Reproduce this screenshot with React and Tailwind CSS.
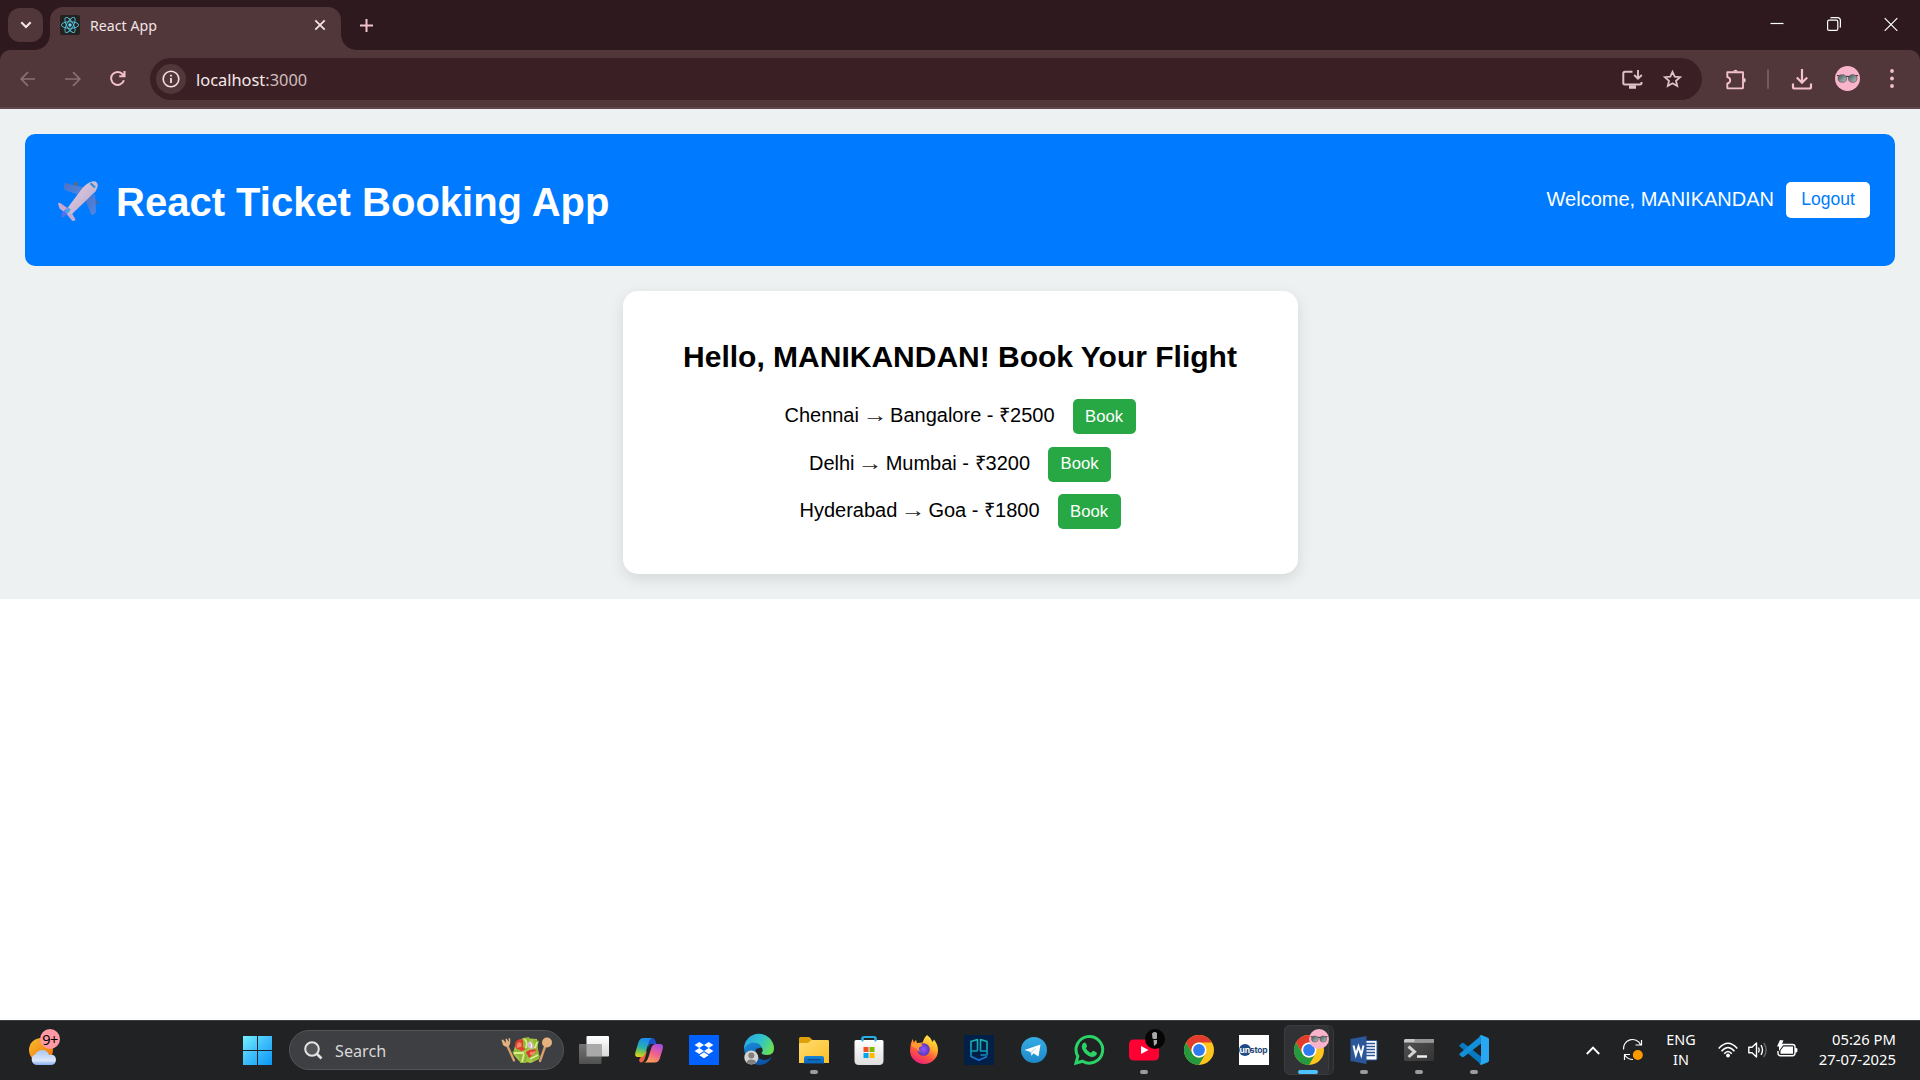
import React from "react";

const flights = [
  { from: "Chennai", to: "Bangalore", price: 2500, row: "h-[48px]", label: "pb-0" },
  { from: "Delhi", to: "Mumbai", price: 3200, row: "h-[47px]", label: "pb-[2px]" },
  { from: "Hyderabad", to: "Goa", price: 1800, row: "h-[47px]", label: "pb-0" },
];

function Icon({ children, size = 30, className = "" }) {
  return (
    <svg width={size} height={size} viewBox={`0 0 ${size} ${size}`} className={`block shrink-0 overflow-visible ${className}`}>
      {children}
    </svg>
  );
}

function ReactLogo() {
  return (
    <svg width="20" height="20" viewBox="0 0 20 20" className="block shrink-0 rounded-[2px] bg-[#222222]">
      <g fill="none" stroke="#58c4dc" strokeWidth="0.9">
        <ellipse cx="10" cy="10" rx="8.6" ry="3.3" />
        <ellipse cx="10" cy="10" rx="8.6" ry="3.3" transform="rotate(60 10 10)" />
        <ellipse cx="10" cy="10" rx="8.6" ry="3.3" transform="rotate(120 10 10)" />
      </g>
      <circle cx="10" cy="10" r="1.7" fill="#61dafb" />
    </svg>
  );
}

function Glasses({ size, className = "" }) {
  return (
    <svg width={size} height={size} viewBox="0 0 25 25" className={`block shrink-0 ${className}`}>
      <defs>
        <linearGradient id="lens" x1="0" y1="0" x2="1" y2="1">
          <stop offset="0" stopColor="#3f5257" />
          <stop offset="1" stopColor="#b9c9c8" />
        </linearGradient>
      </defs>
      <circle cx="12.5" cy="12.5" r="12.5" fill="#f8b4cb" />
      <path d="M2 9.500L5 10M23 9.500L20 10M10.500 11Q12.500 9.500 14.500 11" stroke="#30282a" strokeWidth="1.100" fill="none" />
      <ellipse cx="7.300" cy="12.500" rx="4.200" ry="3.800" fill="url(#lens)" stroke="#5b5053" strokeWidth="0.700" />
      <ellipse cx="17.700" cy="12.500" rx="4.200" ry="3.800" fill="url(#lens)" stroke="#5b5053" strokeWidth="0.700" />
    </svg>
  );
}

function TitleBar() {
  return (
    <div className="flex h-[50px] bg-[#2e191e]">
      <div className="mt-2 ml-2 flex h-[34px] w-[35px] items-center justify-center rounded-[12px] bg-[#51363a]">
        <svg width="12" height="8" viewBox="0 0 12 8" fill="none" stroke="#f3e4e6" strokeWidth="2.200">
          <path d="M1.300 1.300L6 6L10.700 1.300" />
        </svg>
      </div>
      <div className="relative mt-[7px] ml-[7px] flex h-[43px] w-[291px] items-center rounded-t-[13px] bg-[#51363a] pl-[10px]">
        <span className="absolute bottom-0 -left-[15px] h-[15px] w-[15px] bg-[radial-gradient(circle_at_0_0,transparent_14.5px,#51363a_15px)]" />
        <span className="absolute -right-[15px] bottom-0 h-[15px] w-[15px] bg-[radial-gradient(circle_at_100%_0,transparent_14.5px,#51363a_15px)]" />
        <div className="-mt-[7px]"><ReactLogo /></div>
        <span className="-mt-[6px] ml-[10px] text-[14.200px] leading-5 text-[#f3e4e6]">React App</span>
        <svg width="12" height="12" viewBox="0 0 12 12" className="-mt-[7px] mr-[15px] ml-auto" stroke="#f3e4e6" strokeWidth="1.800">
          <path d="M1.300 1.300L10.700 10.700M10.700 1.300L1.300 10.700" />
        </svg>
      </div>
      <svg width="13" height="13" viewBox="0 0 13 13" className="mt-[19px] ml-[19px]" stroke="#f2c1cb" strokeWidth="2">
        <path d="M6.500 0V13M0 6.500H13" />
      </svg>
      <div className="mt-[17px] mr-[22px] ml-auto flex gap-[43px]">
        <svg width="14" height="14" viewBox="0 0 14 14" stroke="#fff" strokeWidth="1.200"><path d="M0.500 6.500H13.500" /></svg>
        <svg width="14" height="14" viewBox="0 0 14 14" fill="none" stroke="#fff" strokeWidth="1.200">
          <rect x="0.600" y="3.200" width="10.200" height="10.200" rx="1.500" />
          <path d="M3.500 1.200Q4 0.600 5 0.600H10.500Q13.400 0.600 13.400 3.500V9Q13.400 10 12.800 10.500" />
        </svg>
        <svg width="14" height="14" viewBox="0 0 14 14" stroke="#fff" strokeWidth="1.200"><path d="M0.700 1.200L13.300 13.800M13.300 1.200L0.700 13.800" /></svg>
      </div>
    </div>
  );
}

function Toolbar() {
  return (
    <div className="bg-[#2e191e]">
      <div className="flex h-[59px] rounded-t-[10px] border-b-2 border-[#5e464a] bg-[#51363a] pt-2 pl-[20px]">
        <div className="mt-[12px] flex h-[18px] gap-[29px]">
          <svg width="16" height="16" viewBox="0 0 16 16" className="mt-px" fill="none" stroke="#8b6f73" strokeWidth="1.700"><path d="M15 8H1.500M8 1.200L1.200 8L8 14.800" /></svg>
          <svg width="16" height="16" viewBox="0 0 16 16" className="mt-px" fill="none" stroke="#8b6f73" strokeWidth="1.700"><path d="M0 8H14M8 1.200L14.800 8L8 14.800" /></svg>
          <svg width="16" height="17" viewBox="0 0 16 17" fill="none" stroke="#f2c1cb" strokeWidth="2">
            <path d="M13.900 10.200A6.500 6.500 0 1 1 12.800 4.400L14.500 6.200M14.500 1V6.300H9.200" />
          </svg>
        </div>
        <div className="ml-[24px] flex h-[42px] w-[1552px] items-center rounded-full bg-[#3a2024] pl-[6px]">
          <div className="flex h-[30px] w-[30px] items-center justify-center rounded-full bg-[#51363a]">
            <svg width="18" height="18" viewBox="0 0 18 18" fill="none" stroke="#f6dfe2" strokeWidth="1.600">
              <circle cx="9" cy="9" r="7.800" /><path d="M9 8V13M9 4.700V6.500" strokeWidth="1.800" />
            </svg>
          </div>
          <span className="mt-px ml-[10px] text-[16.400px] leading-6 text-[#f6e8ea]">localhost<span className="text-[#d0bcbf]">:3000</span></span>
          <svg width="21" height="19" viewBox="0 0 21 19" className="ml-auto" fill="none" stroke="#dcc3c7" strokeWidth="2">
            <path d="M10.500 1.700H3Q1.300 1.700 1.300 3.400V13Q1.300 14.500 3 14.500H17.800Q19.500 14.500 19.500 13V12" />
            <path d="M7 17H14" strokeWidth="3.500" /><path d="M16 0V8.500M12.200 5L16 8.700L19.800 5" strokeWidth="1.900" />
          </svg>
          <svg width="19" height="18" viewBox="0 0 19 18" className="mr-[20px] ml-[20px]" fill="none" stroke="#dcc3c7" strokeWidth="1.800">
            <path d="M9.500 1.800L11.700 6.700L17 7.200L13 10.700L14.200 16L9.500 13.200L4.800 16L6 10.700L2 7.200L7.300 6.700Z" />
          </svg>
        </div>
        <svg width="21" height="21" viewBox="0 0 21 21" className="mt-[11px] ml-[24px]">
          <path d="M1.300 3.200H17V18.800Q17 19.400 16.300 19.400H2Q1.300 19.400 1.300 18.800V14.500Q4.200 14 4.200 11.300Q4.200 8.600 1.300 8.100Z" fill="none" stroke="#f2c1cb" strokeWidth="1.900" strokeLinejoin="round" />
          <path d="M7 2.500A2.600 2.300 0 0 1 12 2.500ZM18 8.700A2.500 2.600 0 0 1 18 13.700Z" fill="#f2c1cb" />
        </svg>
        <div className="mt-[11px] ml-[20px] h-5 w-[2px] rounded-full bg-[#765a5f]" />
        <svg width="22" height="22" viewBox="0 0 22 22" className="mt-[11px] ml-[22px]" fill="none" stroke="#f2c1cb" strokeWidth="2.200">
          <path d="M11 0V13.500M5.800 8.500L11 13.700L16.200 8.500M2 14.500V18Q2 19.500 3.500 19.500H18.500Q20 19.500 20 18V14.500" />
        </svg>
        <Glasses size={25} className="mt-2 ml-[22px]" />
        <svg width="4" height="19" viewBox="0 0 4 19" className="mt-[11px] ml-[30px]" fill="#f2c1cb">
          <circle cx="2" cy="2" r="1.900" /><circle cx="2" cy="9.500" r="1.900" /><circle cx="2" cy="17" r="1.900" />
        </svg>
      </div>
    </div>
  );
}

function Airplane() {
  return (
    <svg width="42" height="42" viewBox="0 0 42 42" className="mt-px mr-[17px] ml-[7px] block shrink-0">
      <defs>
        <linearGradient id="wing" x1="0" y1="0" x2="1" y2="1">
          <stop offset="0" stopColor="#4a74c4" /><stop offset="1" stopColor="#4e86e6" />
        </linearGradient>
        <linearGradient id="body" x1="0" y1="0" x2="1" y2="1">
          <stop offset="0" stopColor="#e6d6e6" /><stop offset="1" stopColor="#b5a0c6" />
        </linearGradient>
      </defs>
      <circle cx="19" cy="4" r="2" fill="#6b6670" />
      <circle cx="38.500" cy="22.500" r="2" fill="#6b6670" />
      <path d="M7.500 3L28 7.500L22 15L8 10Q5.500 7 7.500 3Z" fill="url(#wing)" />
      <path d="M38 14L39 32Q37 36 34 34.500L28.500 20Z" fill="url(#wing)" />
      <path d="M1 23.500Q2 22 4 23.500L11 28.500L14.500 32.500L18.500 39.500Q17 42 15 40.500L9.500 34L2.500 28.500Z" fill="#c9a9d0" />
      <path d="M4.500 37.500L5 33L11 27L13 30L7 37Z" fill="#5c6fe8" />
      <path d="M9 30L25.500 8Q33 0 38.500 1.500Q43 4 38.500 11.500L15 34Q10 35 9 30Z" fill="url(#body)" />
      <path d="M33.500 3.200L38 7.500" stroke="#2a93ce" strokeWidth="2.200" />
      <path d="M12.500 28.500L9 33" stroke="#45a5ee" strokeWidth="3.500" />
    </svg>
  );
}

function Page() {
  return (
    <main className="h-[911px] bg-white font-['Liberation_Sans',Arial,sans-serif]">
      <div className="h-[490px] bg-[#edf1f2] px-[25px] pt-[25px]">
        <header className="flex h-[132px] items-center justify-between rounded-[10px] bg-[#007bff] px-[25px] text-white">
          <h1 className="flex items-center text-[40px] leading-[46px] font-bold">
            <Airplane />
            <span className="mt-[4px]">React Ticket Booking App</span>
          </h1>
          <div className="flex items-center">
            <span className="pb-[2px] text-[20px] leading-6">Welcome, MANIKANDAN</span>
            <button className="ml-[12px] h-[36px] w-[84px] rounded-[5px] bg-white pb-[2px] text-[17.500px] leading-5 text-[#007bff]">Logout</button>
          </div>
        </header>
        <section className="mx-auto mt-[25px] h-[283px] w-[675px] rounded-[15px] bg-white pt-[48px] text-center text-black shadow-[0_5px_15px_rgba(0,0,0,0.1)]">
          <h2 className="text-[30px] leading-[36px] font-bold">Hello, MANIKANDAN! Book Your Flight</h2>
          <ul className="mt-[24px]">
            {flights.map((f) => (
              <li key={f.from} className={`flex items-start justify-center ${f.row}`}>
                <span className="mt-[4px] text-[20px] leading-6">
                  {f.from} <span className="inline-block scale-x-[1.25] text-[#222222]">→</span> {f.to} - ₹{f.price}
                </span>
                <button className={`ml-[18px] h-[35px] w-[63px] rounded-[5px] bg-[#28a745] text-[16.667px] leading-5 text-white ${f.label}`}>Book</button>
              </li>
            ))}
          </ul>
        </section>
      </div>
    </main>
  );
}

function ChromeLogo() {
  return (
    <g>
      <circle cx="15" cy="15" r="15" fill="#fcc41d" />
      <path d="M2 7.500A15 15 0 0 1 28 7.500H15A7.500 7.500 0 0 0 8.500 18.750Z" fill="#e33b2e" />
      <path d="M2 7.500L8.500 18.750A7.500 7.500 0 0 0 21.500 18.750L15 30A15 15 0 0 1 2 7.500Z" fill="#24993f" />
      <circle cx="15" cy="15" r="7.500" fill="#fff" />
      <circle cx="15" cy="15" r="5.900" fill="#2f7bf0" />
    </g>
  );
}

function TaskItem({ running, children }) {
  return (
    <div className="relative flex h-[60px] w-[55px] items-center justify-center">
      {children}
      {running && <span className="absolute bottom-[6px] h-[4px] w-[8px] rounded-full bg-[#9b9c9d]" />}
    </div>
  );
}

function TaskIcons() {
  return (
    <div className="ml-[2px] flex">
      <TaskItem>
        <Icon>
          <defs>
            <linearGradient id="tv1" x1="0" y1="0" x2="0" y2="1"><stop offset="0" stopColor="#fff" /><stop offset="1" stopColor="#d8d8d8" /></linearGradient>
            <linearGradient id="tv2" x1="0" y1="0" x2="0" y2="1"><stop offset="0" stopColor="#747474" /><stop offset="1" stopColor="#505050" /></linearGradient>
          </defs>
          <rect x="7.500" y="1" width="22.500" height="20.500" rx="1" fill="url(#tv1)" />
          <rect x="0" y="9" width="22.500" height="20" rx="1" fill="url(#tv2)" />
          <rect x="7.500" y="9" width="15" height="12.500" fill="#a9a9a9" />
        </Icon>
      </TaskItem>
      <TaskItem>
        <Icon>
          <defs>
            <linearGradient id="cp1" x1="0.300" y1="0" x2="0.100" y2="1"><stop offset="0" stopColor="#1a8ee8" /><stop offset="0.450" stopColor="#28b0b0" /><stop offset="0.750" stopColor="#8fc83c" /><stop offset="1" stopColor="#f7d21c" /></linearGradient>
            <linearGradient id="cp2" x1="0.800" y1="0" x2="0.300" y2="1"><stop offset="0" stopColor="#a24bea" /><stop offset="0.500" stopColor="#f0608f" /><stop offset="1" stopColor="#fba24e" /></linearGradient>
          </defs>
          <path d="M14 3H18Q20.500 3 21.500 6L22.500 9H17Q15 9 14 13Z" fill="#1c50cc" />
          <path d="M7 27.500Q9.500 27.500 11 23L13 16L8 20L5 25Q5.500 27.500 7 27.500Z" fill="#ec6043" />
          <path d="M9 3H18Q15.500 4 14.500 8L11.500 18Q10 22 6.500 22H4Q0 22 1.500 17L4.500 7Q6 3 9 3Z" fill="url(#cp1)" />
          <path d="M21 27.500H10Q13 27 14.500 22L17.500 12.500Q18.800 9 22 9H26Q30 9 28.700 14L25.800 23.500Q24.500 27.500 21 27.500Z" fill="url(#cp2)" />
        </Icon>
      </TaskItem>
      <TaskItem>
        <Icon>
          <rect width="30" height="30" fill="#0061fe" />
          <path d="M10.300 7L15 10L10.300 13L5.600 10ZM19.700 7L24.400 10L19.700 13L15 10ZM10.300 13L15 16L10.300 19L5.600 16ZM19.700 13L24.400 16L19.700 19L15 16ZM15 17.300L19.700 20.300L15 23.300L10.300 20.300Z" fill="#fff" />
        </Icon>
      </TaskItem>
      <TaskItem>
        <Icon>
          <defs>
            <linearGradient id="ed1" x1="0" y1="0.200" x2="1" y2="0.600"><stop offset="0" stopColor="#2aa5e6" /><stop offset="0.550" stopColor="#30c5c8" /><stop offset="1" stopColor="#6be051" /></linearGradient>
            <linearGradient id="ed2" x1="0" y1="0" x2="0.500" y2="1"><stop offset="0" stopColor="#1b8fdd" /><stop offset="1" stopColor="#0b54a7" /></linearGradient>
          </defs>
          <path d="M0 14Q2 5 12 7L19 12L12 14Q10 23 19 25Q24 25.500 28 21.500Q24 30 15 30Q2 29 0 14Z" fill="url(#ed2)" />
          <path d="M0 14A15 15 0 0 1 30 13.500Q30 20 23.500 20Q17.500 20 17.500 18Q19 16.500 18.500 14Q16 7.500 9.500 7.500Q3 8 0 14Z" fill="url(#ed1)" />
          <circle cx="7.300" cy="22.500" r="7" fill="#d4d2cf" />
          <circle cx="7.300" cy="20.500" r="3" fill="#817e7b" /><path d="M2.500 27.500Q3 24.500 7.300 24.500T12.100 27.500Q7.300 31 2.500 27.500Z" fill="#817e7b" />
        </Icon>
      </TaskItem>
      <TaskItem running>
        <Icon>
          <defs>
            <linearGradient id="fo" x1="0" y1="0" x2="1" y2="1"><stop offset="0" stopColor="#ffdd70" /><stop offset="1" stopColor="#fcbf28" /></linearGradient>
            <linearGradient id="fb" x1="0" y1="0" x2="0" y2="1"><stop offset="0" stopColor="#1583d4" /><stop offset="1" stopColor="#0a64b6" /></linearGradient>
          </defs>
          <path d="M0 3.500Q0 2 1.500 2H9.500Q10.500 2 11.500 3L13.500 5H28.500Q30 5 30 6.500V11H0Z" fill="#dfa009" />
          <path d="M0 9Q0 8 1.500 8H9L12.500 5H28.500Q30 5 30 6.500V28H0Z" fill="url(#fo)" />
          <path d="M5 28.500V23Q5 21 7 21H23Q25 21 25 23V28.500Z" fill="url(#fb)" />
          <path d="M8.500 24.700H21.500" stroke="#084a8c" strokeWidth="1.300" />
        </Icon>
      </TaskItem>
      <TaskItem>
        <Icon>
          <defs><linearGradient id="st" x1="0" y1="0" x2="0" y2="1"><stop offset="0" stopColor="#fff" /><stop offset="1" stopColor="#dedede" /></linearGradient></defs>
          <path d="M8.500 7V3.500Q8.500 2 10 2H20Q21.500 2 21.500 3.500V7" fill="none" stroke="#28aee6" strokeWidth="2" />
          <path d="M0.500 6.500Q0.500 5 2 5H28Q29.500 5 29.500 6.500V25.500Q29.500 30 25 30H5Q0.500 30 0.500 25.500Z" fill="url(#st)" />
          <path d="M8.500 2V6.500M21.500 2V6.500" stroke="#28aee6" strokeWidth="2" />
          <rect x="9.500" y="12" width="5" height="5" fill="#f25022" /><rect x="15.500" y="12" width="5" height="5" fill="#7fba00" />
          <rect x="9.500" y="18" width="5" height="5" fill="#00a4ef" /><rect x="15.500" y="18" width="5" height="5" fill="#ffb900" />
        </Icon>
      </TaskItem>
      <TaskItem>
        <Icon>
          <defs>
            <linearGradient id="ff" x1="0.800" y1="0" x2="0.300" y2="1"><stop offset="0" stopColor="#fff04f" /><stop offset="0.350" stopColor="#ffb52a" /><stop offset="0.650" stopColor="#ff5a3c" /><stop offset="1" stopColor="#ec1e79" /></linearGradient>
            <radialGradient id="fg"><stop offset="0" stopColor="#9059ff" /><stop offset="1" stopColor="#5b36b8" /></radialGradient>
          </defs>
          <path d="M18 0Q22 2.500 23.500 7L25 4.500Q29 9.500 29 15.500A14 13.500 0 0 1 1 15.500Q1 9 3.500 4L5 7.500Q6 5.500 7 5L8 8Q11 7.500 13.500 7.500Q14.500 3 18 0Z" fill="url(#ff)" />
          <circle cx="14.500" cy="14.500" r="6.300" fill="url(#fg)" />
          <path d="M2 10Q6 7.500 13 9.500Q14 11 10.500 12Q8.500 15 12 16.500Q8.500 17 7.500 13Q5 13.500 2 10Z" fill="#ff9a32" />
        </Icon>
      </TaskItem>
      <TaskItem>
        <Icon>
          <defs><linearGradient id="pg" x1="0" y1="0" x2="0" y2="1"><stop offset="0" stopColor="#12b7b4" /><stop offset="0.650" stopColor="#1299b4" /><stop offset="1" stopColor="#1769d6" /></linearGradient></defs>
          <rect width="30" height="30" fill="#021f47" />
          <path d="M13.500 16H7V6.500L13.500 4.500V16M7 16V22M23 16H16.500V4.500L23 6.500V20.500M7 21.500L15 25.300L23 21.500M16.500 20H22" fill="none" stroke="url(#pg)" strokeWidth="1.600" strokeLinejoin="round" />
        </Icon>
      </TaskItem>
      <TaskItem>
        <Icon>
          <defs><linearGradient id="tg" x1="0" y1="0" x2="0" y2="1"><stop offset="0" stopColor="#35ade3" /><stop offset="1" stopColor="#1e88c9" /></linearGradient></defs>
          <circle cx="15" cy="15" r="13" fill="url(#tg)" />
          <path d="M5.500 15L21.500 9.500L19.500 21.500L14.500 18.300L12.500 20.800L11.500 17Z" fill="#fff" />
          <path d="M11.500 17L19 11.500L13 17.500L12.500 20.800Z" fill="#bcdcf0" />
        </Icon>
      </TaskItem>
      <TaskItem>
        <Icon>
          <path d="M2 28L3.800 21.300A13.300 13.300 0 1 1 8.600 26.200Z" fill="none" stroke="#2bd367" strokeWidth="3" />
          <path d="M10.300 7.500Q11.500 7.300 12 8.500L13 11Q13.200 12 11.800 13.300Q13.300 16.400 16.900 18L18.700 16Q19.200 15.700 20 16.100L22.600 17.400Q23.200 18 22.600 19.500Q21.500 21.800 18.700 22Q14 21.500 10.300 17.400Q7.500 14.200 7.700 11.300Q8.200 8.300 10.300 7.500Z" fill="#2bd367" />
        </Icon>
      </TaskItem>
      <TaskItem running>
        <Icon>
          <rect y="4.500" width="30" height="21" rx="4.500" fill="#ff0033" />
          <path d="M12 11L19.500 15L12 19Z" fill="#fff" />
          <circle cx="26" cy="4" r="10" fill="#050505" />
          <path d="M23 -1.500Q25.500 -4 28 -2V3.500Q26 4.500 23.500 3.500ZM24.500 5H28V8.500L25 11Z" fill="#a9a9a9" />
        </Icon>
      </TaskItem>
      <TaskItem><Icon><ChromeLogo /></Icon></TaskItem>
      <TaskItem>
        <div className="relative flex h-[30px] w-[30px] items-center bg-white">
          <span className="absolute top-[9px] left-0 h-3 w-3 rounded-full bg-[#1d4a87]" />
          <span className="relative ml-[1px] font-[Inter,sans-serif] text-[8.500px] leading-3 font-bold tracking-[-0.150px] text-[#1d4575]"><span className="text-white">un</span>stop</span>
        </div>
      </TaskItem>
      <TaskItem>
        <div className="absolute top-[5px] left-[3px] h-[50px] w-[50px] rounded-[6px] border border-[#37393c] bg-[#2a2c2f]" />
        <div className="absolute top-[5px] left-[3px] h-[50px] w-[45px] rounded-[6px] border border-[#3b3d41] bg-[#303236]" />
        <Icon className="relative"><ChromeLogo /></Icon>
        <Glasses size={20} className="absolute top-[9px] left-[28px]" />
        <span className="absolute bottom-[6px] left-[17px] h-[4px] w-5 rounded-full bg-[#4cc2ff]" />
      </TaskItem>
      <TaskItem running>
        <Icon>
          <rect x="14" y="5.500" width="14" height="19.500" rx="1" fill="#fff" stroke="#2b579a" />
          <path d="M17 8.500H26M17 11.500H26M17 14.500H26M17 17.500H26M17 20.500H26" stroke="#2b579a" strokeWidth="1.300" />
          <path d="M1.500 4L17.500 1V29L1.500 26Z" fill="#2b579a" />
          <path d="M4.500 10.500L6.800 20L9.500 11.500L12.200 20L14.500 10.500" fill="none" stroke="#fff" strokeWidth="2" />
        </Icon>
      </TaskItem>
      <TaskItem running>
        <Icon>
          <defs><linearGradient id="tm" x1="0" y1="0" x2="1" y2="1"><stop offset="0" stopColor="#555" /><stop offset="1" stopColor="#333" /></linearGradient></defs>
          <rect y="4" width="30" height="22" rx="1.500" fill="url(#tm)" />
          <path d="M0 7.500V5.500Q0 4 1.500 4H28.500Q30 4 30 5.500V7.500Z" fill="#c7c7c7" />
          <path d="M10.500 4H30V7.500H10.500Z" fill="#969696" />
          <path d="M4.500 11.500L10.500 16.700L4.500 22" fill="none" stroke="#d2d2d2" strokeWidth="3" />
          <path d="M13 21.500H23" stroke="#efefef" strokeWidth="2.500" />
        </Icon>
      </TaskItem>
      <TaskItem running>
        <Icon>
          <path d="M0.500 10L3 8Q4 7.500 5 8.200L24 23V29.500L21 28.500L0.700 11.500Q0 10.800 0.500 10Z" fill="#0879be" />
          <path d="M0.500 20L3 22Q4 22.500 5 21.800L24 7V0.500L21 1.500L0.700 18.500Q0 19.200 0.500 20Z" fill="#128fd8" />
          <path d="M22 0L28.500 2.500Q30 3 30 4.500V25.500Q30 27 28.500 27.500L22 30Q20.500 29.500 20.500 28Q22 28.800 22 27V3Q22 1.200 20.500 2Q20.500 0.500 22 0Z" fill="#2aa7f3" />
        </Icon>
      </TaskItem>
    </div>
  );
}

function SaladArt() {
  return (
    <svg width="52" height="27" viewBox="0 0 52 27" className="mr-[10px] ml-auto block shrink-0">
      <path d="M5.500 7L13 23.500M45 7L39 24" stroke="#d8a06a" strokeWidth="2.300" strokeLinecap="round" />
      <path d="M0.500 3L2 8Q4.500 11 8 9Q10 6 9 1L7.500 1.500L8 5L5.500 1.500L4.500 2L5 6L2 2.500Z" fill="#e5b27d" />
      <ellipse cx="46" cy="5.500" rx="5" ry="5" fill="#e5b27d" />
      <path d="M15 5L22 1L36 2L38 22L30 26L18 24L12 17Z" fill="#a9c64a" />
      <circle cx="20" cy="8" r="6" fill="#e0402f" />
      <path d="M25 15Q30 11 38 13Q37 20 32 22Q26 21 25 15Z" fill="#dc3a2c" />
      <path d="M18 5Q22 6 20 10L16 11Q15 7 18 5ZM29 15L35 14L33 19L29 18Z" fill="#f58468" />
      <path d="M22 1L28 0L29 6L26 14L22 10ZM11 15L17 12L27 18L25 26L19 26L18 20ZM32 2L38 4L36 11L39 20L33 24L27 22L35 15Z" fill="#8fb836" />
      <path d="M23 2Q27 4 25 11M13 16L23 16M21 25L23 17M36 5L34 11M29 22L37 18" stroke="#dbee8d" strokeWidth="1.800" fill="none" />
      <path d="M28 4Q34 7 32 12Q27 12 26 8Z" fill="#d6b3cf" />
      <path d="M29 5Q32 8 30 11" stroke="#fff" strokeWidth="1" fill="none" />
    </svg>
  );
}

function Tray() {
  return (
    <div className="mr-[24px] ml-auto flex h-full items-center text-white">
      <svg width="14" height="9" viewBox="0 0 14 9" className="mt-px" fill="none" stroke="#fff" strokeWidth="1.900"><path d="M0.800 8L7 1.600L13.200 8" /></svg>
      <svg width="22" height="22" viewBox="0 0 22 22" className="ml-[22px] overflow-visible" fill="none" stroke="#fff" strokeWidth="1.200">
        <path d="M1.500 10.500A9 9 0 0 1 18.500 5.500M19.500 1V6H13.500M8 15.500H2.500V21M2.800 16Q5.500 20.500 11 20.500" />
        <circle cx="15.800" cy="16" r="5" fill="#ff9900" stroke="none" />
      </svg>
      <div className="ml-[16px] w-[42px] text-center text-[14.400px] leading-5">
        <div>ENG</div><div>IN</div>
      </div>
      <svg width="20" height="16" viewBox="0 0 20 16" className="ml-[16px]" fill="none" stroke="#fff" strokeWidth="1.500">
        <path d="M0.700 6.500Q10 -4 19.300 6.500M3.500 9.200Q10 1.600 16.500 9.200M6.200 11.800Q10 7.200 13.800 11.800" />
        <circle cx="10" cy="13.500" r="1.900" fill="#fff" stroke="none" />
      </svg>
      <svg width="20" height="18" viewBox="0 0 20 18" className="ml-[10px]" fill="none" stroke="#fff" strokeWidth="1.400">
        <path d="M0.800 6.200H4L8.500 2V16L4 11.800H0.800Z" strokeLinejoin="round" />
        <path d="M10.500 6.500Q12 9 10.500 11.500M13 4.200Q16 9 13 13.800" /><path d="M15.800 2Q20.500 9 15.800 16" stroke="#666" />
      </svg>
      <svg width="21" height="17" viewBox="0 0 21 17" className="-mt-[3px] ml-[9px]">
        <path d="M5 4.500H15.500Q18 4.500 18 7V13Q18 15.700 15.500 15.700H3.500Q1 15.700 1 13V11" fill="none" stroke="#fff" strokeWidth="1.400" />
        <path d="M6.500 6.500H16V13.800H3.500V10.500ZM18 8H19.500Q20.500 8 20.500 10T19.500 12.500H18Z" fill="#fff" />
        <path d="M3 0L6.500 0.500L5 4H7L2 11V6.500H0Z" fill="#fff" />
      </svg>
      <div className="ml-auto w-[98px] pb-[2px] text-right text-[14.800px] leading-5">
        <div>05:26 PM</div><div>27-07-2025</div>
      </div>
    </div>
  );
}

function Taskbar() {
  return (
    <div className="flex h-[60px] items-center bg-[#202224] shadow-[inset_0_1px_0_#3c3e40]">
      <div className="relative ml-[29px] h-[40px] w-[32px]">
        <svg width="32" height="40" viewBox="0 0 32 40" className="block">
          <defs>
            <linearGradient id="sun" x1="0" y1="0" x2="1" y2="1"><stop offset="0" stopColor="#f7be2c" /><stop offset="1" stopColor="#f46b0a" /></linearGradient>
            <linearGradient id="cloud" x1="0" y1="0" x2="0" y2="1"><stop offset="0" stopColor="#a9c7f5" /><stop offset="0.700" stopColor="#dce7fa" /><stop offset="1" stopColor="#82aef0" /></linearGradient>
          </defs>
          <circle cx="12" cy="20" r="12" fill="url(#sun)" />
          <path d="M7.500 35A5.500 5.500 0 0 1 6 24.500Q9 19.500 14.500 20Q19 21 20 25Q27 24 27 30Q26.500 35 22 35Z" fill="url(#cloud)" />
        </svg>
        <span className="absolute -top-px left-[11px] flex h-5 w-5 items-center justify-center rounded-full bg-[#ff99a4] text-[14.500px] leading-4 tracking-[-0.500px] text-black">9+</span>
      </div>
      <svg width="29" height="29" viewBox="0 0 29 29" className="ml-[182px] block shrink-0">
        <defs><linearGradient id="win" x1="0" y1="0" x2="1" y2="1"><stop offset="0" stopColor="#74f0fd" /><stop offset="0.500" stopColor="#3dbdfa" /><stop offset="1" stopColor="#0a97f7" /></linearGradient></defs>
        <path d="M0 0H14V14H0ZM15 0H29V14H15ZM0 15H14V29H0ZM15 15H29V29H15Z" fill="url(#win)" />
      </svg>
      <div className="ml-[17px] flex h-[40px] w-[275px] items-center rounded-full border border-[#545557] bg-[#3e3f42] pl-[14px]">
        <svg width="19" height="19" viewBox="0 0 19 19" fill="none" stroke="#e4e4e5"><circle cx="8" cy="8" r="6.800" fill="#545557" strokeWidth="2" /><path d="M13 13L17.500 17.500" strokeWidth="2.600" /></svg>
        <span className="mt-px ml-[12px] text-[16.200px] leading-6 text-[#d8d8d9]">Search</span>
        <SaladArt />
      </div>
      <TaskIcons />
      <Tray />
    </div>
  );
}

export default function App() {
  return (
    <div className="flex h-[1080px] w-[1920px] flex-col overflow-hidden bg-white font-['Noto_Sans','Open_Sans',sans-serif]">
      <TitleBar />
      <Toolbar />
      <Page />
      <Taskbar />
    </div>
  );
}
